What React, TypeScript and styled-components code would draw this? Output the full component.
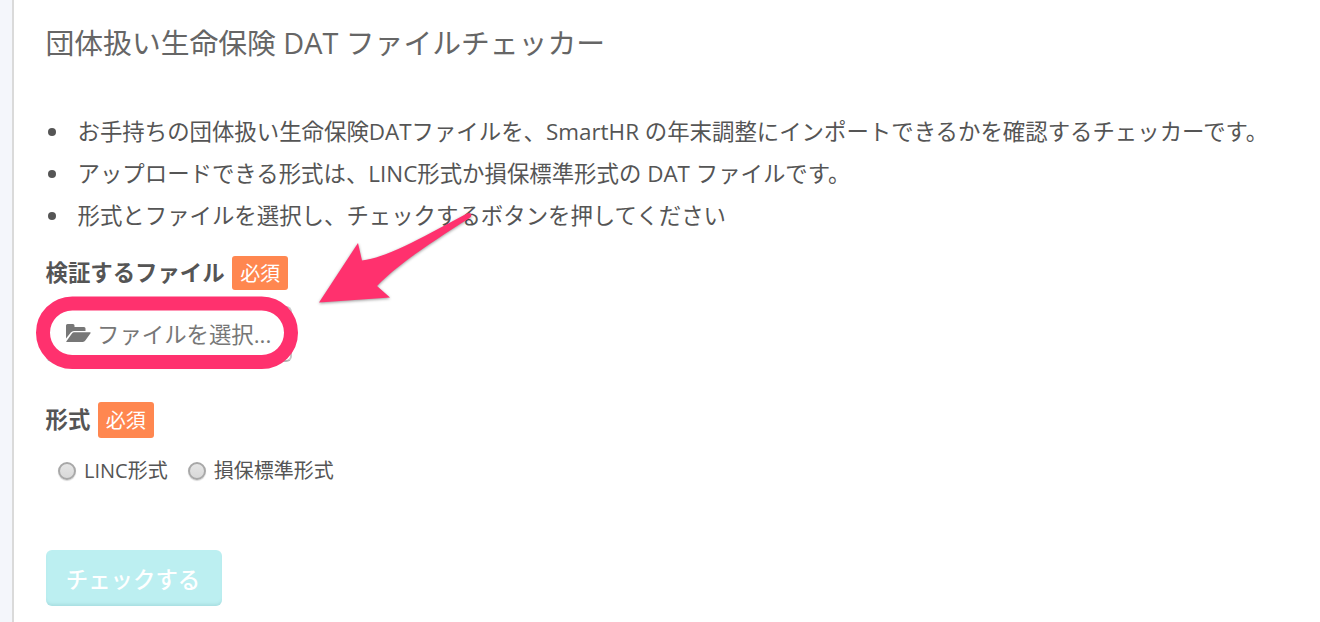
import React from "react";
import styled, { createGlobalStyle } from "styled-components";

const GlobalStyle = createGlobalStyle`
  * { box-sizing: border-box; }
  body {
    margin: 0;
    background: #f4f6fb;
    color: #555;
    font-family: "Open Sans", "Noto Sans CJK JP", sans-serif;
    font-size: 22.4px;
    overflow: hidden;
  }
`;

const Page = styled.div`
  position: relative;
  height: 622px;
  padding-left: 12px;
`;

const Panel = styled.main`
  height: 100%;
  border-left: 2px solid #dadada;
  background: #fff;
  padding: 22px 32px 0;
`;

const Title = styled.h1`
  margin: 0 0 0 -0.5px;
  height: 42px;
  line-height: 42px;
  font-size: 28.8px;
  font-weight: 400;
  color: #666;
  white-space: nowrap;
`;

const Notes = styled.ul`
  margin: 47px 0 0;
  padding: 0;
  list-style: none;
`;

const Note = styled.li`
  display: flex;
  align-items: center;
  height: 42px;
  line-height: 42px;
  font-size: 22.42px;
  white-space: nowrap;

  &::before {
    content: "";
    width: 8px;
    height: 8px;
    margin: 0 21.5px 0 2px;
    border-radius: 50%;
    background: #555;
  }
`;

const Field = styled.section<{ $top: number }>`
  margin-top: ${(p) => p.$top}px;
`;

const FieldHeading = styled.div<{ $height: number }>`
  display: flex;
  align-items: center;
  gap: 7.5px;
  height: ${(p) => p.$height}px;
  margin-left: -0.5px;
`;

const Label = styled.span`
  line-height: 36px;
  font-weight: 700;
`;

const Required = styled.span`
  display: flex;
  align-items: center;
  justify-content: center;
  width: 56px;
  height: 100%;
  border-radius: 3px;
  background: #ff8750;
  color: #fff;
  font-size: 20px;
  line-height: 30px;
  padding-top: 2px;
`;

const FileButton = styled.button`
  display: flex;
  align-items: center;
  gap: 6px;
  width: 246px;
  height: 56px;
  margin-top: 16px;
  padding: 0 0 2px 18px;
  border: 2px solid #c4c4c4;
  border-bottom-color: #b4b4b4;
  border-radius: 6px;
  background: #fff;
  color: #777;
  font: inherit;
  white-space: nowrap;
`;

const Radios = styled.div`
  display: flex;
  gap: 20px;
  margin: 15px 0 0 12px;
`;

const RadioLabel = styled.label`
  display: flex;
  align-items: center;
  gap: 8px;
  height: 36px;
  font-size: 20px;
  line-height: 36px;
`;

const Radio = styled.input.attrs({ type: "radio" })`
  appearance: none;
  width: 18px;
  height: 18px;
  margin: 0;
  border: 2px solid #a8a8a8;
  border-radius: 50%;
  background: linear-gradient(#e5e5e5, #d9d9d9);
  box-shadow: 0 1px 1px rgba(0, 0, 0, 0.16);
`;

const Submit = styled.button`
  display: block;
  width: 176px;
  height: 56px;
  margin-top: 61px;
  padding: 0 2px 0 0;
  border: 0;
  border-radius: 6px;
  background: #bceff1;
  box-shadow: inset 0 -3px 3px -1px rgba(0, 90, 100, 0.1);
  color: #fff;
  font: inherit;
  font-weight: 500;
`;

const Annotation = styled.svg`
  position: absolute;
  left: 0;
  top: 0;
  pointer-events: none;
`;

const Arrow = styled.path`
  filter: drop-shadow(0 1.5px 1.5px rgba(0, 0, 0, 0.4));
`;

const FolderIcon = () => (
  <svg width="25" height="20" viewBox="0 0 25 20" fill="currentColor">
    <path d="M0 15.5V2.5Q0 1 1.5 1H7q1.5 0 1.5 1.5V4H18q1.5 0 1.5 1.5V8H8Q6 8 4.8 9.5Z" />
    <path d="M7.8 9.3H24q1.2 0 .5 1l-5 7Q18.4 19 16.8 19H1q-1.2 0-.4-1l5-7.1Q6.5 9.3 7.8 9.3Z" />
  </svg>
);

const notes = [
  "お手持ちの団体扱い生命保険DATファイルを、SmartHR の年末調整にインポートできるかを確認するチェッカーです。",
  "アップロードできる形式は、LINC形式か損保標準形式の DAT ファイルです。",
  "形式とファイルを選択し、チェックするボタンを押してください",
];

export default function App() {
  return (
    <Page>
      <GlobalStyle />
      <Panel>
        <Title>団体扱い生命保険 DAT ファイルチェッカー</Title>
        <Notes>
          {notes.map((note) => (
            <Note key={note}>{note}</Note>
          ))}
        </Notes>
        <Field $top={19}>
          <FieldHeading $height={34}>
            <Label>検証するファイル</Label>
            <Required>必須</Required>
          </FieldHeading>
          <FileButton>
            <FolderIcon />
            ファイルを選択...
          </FileButton>
        </Field>
        <Field $top={40}>
          <FieldHeading $height={36}>
            <Label>形式</Label>
            <Required>必須</Required>
          </FieldHeading>
          <Radios>
            <RadioLabel>
              <Radio name="format" />
              LINC形式
            </RadioLabel>
            <RadioLabel>
              <Radio name="format" />
              損保標準形式
            </RadioLabel>
          </Radios>
        </Field>
        <Submit>チェックする</Submit>
      </Panel>
      <Annotation width="500" height="390" viewBox="0 0 500 390">
        <rect x="43" y="303.5" width="248" height="58.5" rx="29.25" fill="none" stroke="#ff316e" strokeWidth="14" />
        <Arrow
          d="M319 302.5L358 243L362 260.5C390 257 430 233 467 213.5Q470.5 212 471.3 214.5Q472 216.5 469 218.5C435 240 398 264 377 286L390 297.5Z"
          fill="#ff316e"
        />
      </Annotation>
    </Page>
  );
}
